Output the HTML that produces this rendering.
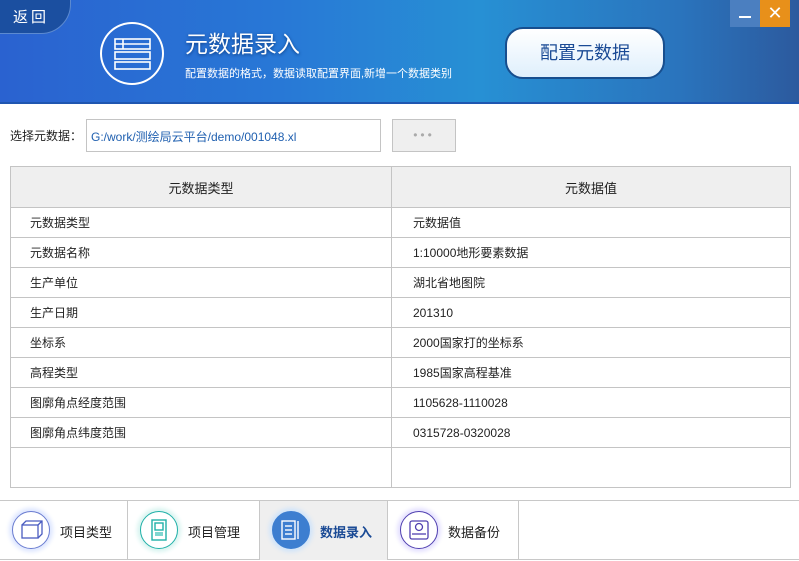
<!DOCTYPE html>
<html><head><meta charset="utf-8"><style>
*{margin:0;padding:0;box-sizing:border-box}
body{width:799px;height:561px;overflow:hidden;background:#fff;font-family:"Liberation Sans","Noto Sans CJK SC",sans-serif;font-size:12px;color:#222;position:relative}
.hdr{position:absolute;left:0;top:0;width:799px;height:104px;background:linear-gradient(90deg,#2a62d0 0%,#2878d6 35%,#2790d4 60%,#2a74bd 85%,#2c5a9e 100%);border-bottom:2px solid #1f56b0}
.back{position:absolute;left:-20px;top:-10px;width:91px;height:44px;border-radius:0 0 30px 0;background:#1b4fa0;border:1px solid #5c8ad0;color:#fff;font-size:15px;padding:15px 0 0 32px;letter-spacing:3px}
.ic{position:absolute;left:100px;top:22px;width:64px;height:63px;border:2px solid #fff;border-radius:50%}
.t1{position:absolute;left:185px;top:25px;color:#fff;font-size:23px;text-shadow:0 1px 3px #0a3a80}
.t2{position:absolute;left:185px;top:65px;color:#fff;font-size:11px}
.btn{position:absolute;left:505px;top:27px;width:160px;height:52px;border-radius:18px;background:linear-gradient(#fff,#dfeffc);border:2px solid #174e8e;color:#1a4a95;font-size:18px;text-align:center;line-height:48px}
.min{position:absolute;left:730px;top:0;width:30px;height:27px;background:#4b7fc0}
.min:after{content:"";position:absolute;left:9px;top:16px;width:12px;height:2px;background:#fff}
.cls{position:absolute;left:760px;top:0;width:30px;height:27px;background:#e8901a;color:#fff;text-align:center;font-size:18px;line-height:27px}
.lbl{position:absolute;left:10px;top:127px}
.inp{position:absolute;left:86px;top:119px;width:295px;height:33px;border:1px solid #c4c4c4;color:#2060b0;padding:8px 0 0 4px;font-size:12px}
.dots{position:absolute;left:392px;top:119px;width:64px;height:33px;border:1px solid #c4c4c4;background:#efefef;color:#aaa;text-align:center;line-height:30px;letter-spacing:3px}
table{position:absolute;left:10px;top:166px;width:781px;border-collapse:collapse}
td{border:1px solid #c4c4c4;height:30px;padding-left:19px;font-size:12px}
tr.h td{height:41px;background:#efefef;text-align:center;padding:0;font-size:13px}
td.c2{padding-left:21px}
.nav{position:absolute;left:0;top:500px;width:799px;height:60px;border-top:1px solid #c8c8c8;border-bottom:1px solid #c8c8c8}
.it{position:absolute;top:0;height:59px;border-right:1px solid #c8c8c8}
.it .c{position:absolute;left:12px;top:10px;width:38px;height:38px;border-radius:50%;border:1.5px solid #6a7cd0;box-shadow:0 0 4px 3px #dde6ff;background:#fff}
.it span{position:absolute;left:60px;top:21px;font-size:13px}
</style></head><body>
<div class="hdr">
<div class="back">返回</div>
<div class="ic"><svg width="60" height="60" viewBox="0 0 60 60"><g fill="none" stroke="#fff" stroke-width="1.6"><rect x="13" y="15" width="35" height="10"/><line x1="21" y1="15" x2="21" y2="25"/><line x1="13" y1="20" x2="48" y2="20"/><rect x="13" y="28" width="35" height="7"/><rect x="13" y="38" width="35" height="7"/></g></svg></div>
<div class="t1">元数据录入</div>
<div class="t2">配置数据的格式，数据读取配置界面,新增一个数据类别</div>
<div class="btn">配置元数据</div>
<div class="min"></div><div class="cls">✕</div>
</div>
<div class="lbl">选择元数据：</div>
<div class="inp">G:/work/测绘局云平台/demo/001048.xl</div>
<div class="dots">•••</div>
<table>
<tr class="h"><td style="width:381px">元数据类型</td><td>元数据值</td></tr>
<tr><td>元数据类型</td><td class="c2">元数据值</td></tr>
<tr><td>元数据名称</td><td class="c2">1:10000地形要素数据</td></tr>
<tr><td>生产单位</td><td class="c2">湖北省地图院</td></tr>
<tr><td>生产日期</td><td class="c2">201310</td></tr>
<tr><td>坐标系</td><td class="c2">2000国家打的坐标系</td></tr>
<tr><td>高程类型</td><td class="c2">1985国家高程基准</td></tr>
<tr><td>图廓角点经度范围</td><td class="c2">1105628-1110028</td></tr>
<tr><td>图廓角点纬度范围</td><td class="c2">0315728-0320028</td></tr>
<tr><td style="height:40px"></td><td></td></tr>
</table>
<div class="nav">
<div class="it" style="left:0;width:128px"><div class="c"><svg width="36" height="36"><g fill="none" stroke="#4a5cc0" stroke-width="1.3"><rect x="9" y="13" width="16" height="13"/><path d="M9 13l4-4h16v13l-4 4M25 13l4-4"/></g></svg></div><span>项目类型</span></div>
<div class="it" style="left:128px;width:132px"><div class="c" style="border-color:#20b0a8;box-shadow:0 0 4px 3px #d8f4f0"><svg width="36" height="36"><g fill="none" stroke="#20b0a8" stroke-width="1.4"><rect x="11" y="8" width="14" height="20"/><rect x="14" y="11" width="8" height="7"/></g><rect x="14" y="20" width="8" height="4" fill="#7fd6d0"/></svg></div><span>项目管理</span></div>
<div class="it" style="left:260px;width:128px;background:#efefef"><div class="c" style="background:#3d7ed0;border-color:#3d7ed0;box-shadow:0 0 4px 3px #d0e4fa"><svg width="36" height="36"><g fill="none" stroke="#fff" stroke-width="1.4"><rect x="9" y="9" width="13" height="18"/><line x1="12" y1="14" x2="19" y2="14"/><line x1="12" y1="18" x2="19" y2="18"/><line x1="12" y1="22" x2="19" y2="22"/><line x1="25" y1="9" x2="25" y2="27"/></g></svg></div><span style="color:#1a4a95;font-weight:bold">数据录入</span></div>
<div class="it" style="left:388px;width:131px"><div class="c" style="border-color:#5040b0;box-shadow:0 0 4px 3px #e4e0ff"><svg width="36" height="36"><g fill="none" stroke="#5040b0" stroke-width="1.3"><rect x="9" y="9" width="18" height="18" rx="2"/><circle cx="18" cy="15" r="3.5"/><line x1="11" y1="22" x2="25" y2="22"/></g></svg></div><span>数据备份</span></div>
</div>
</body></html>
